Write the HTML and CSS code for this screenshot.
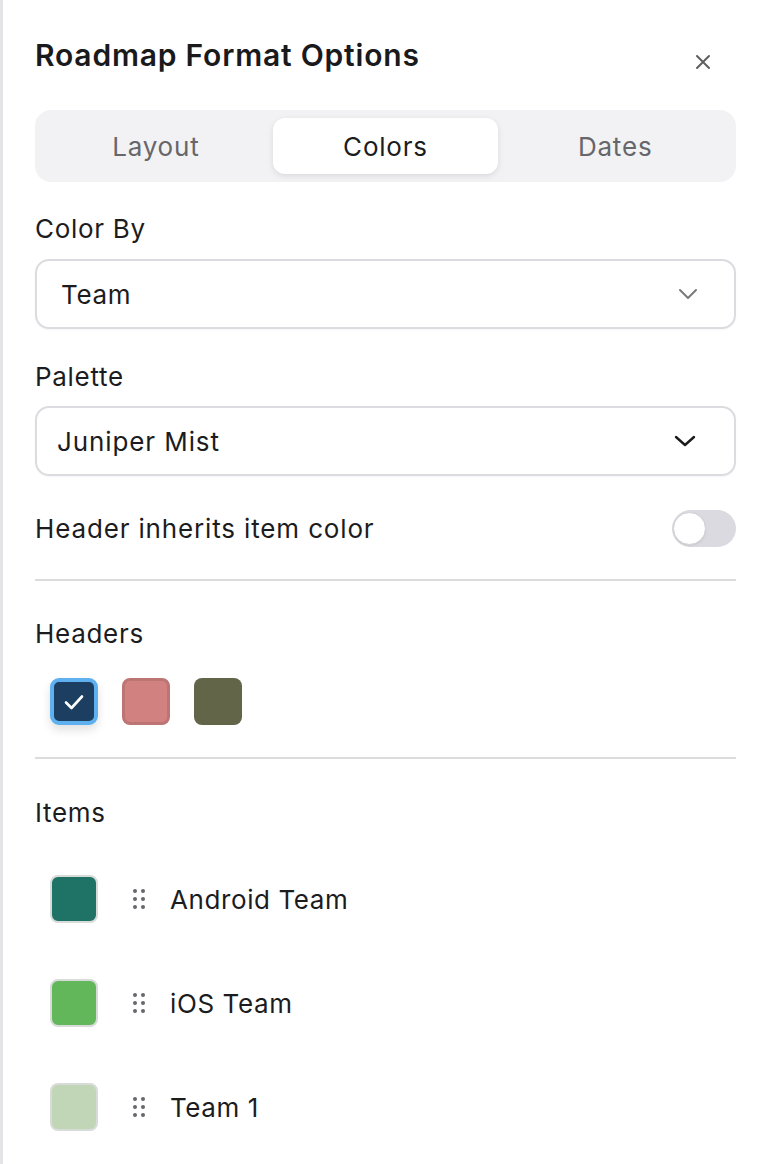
FILE: index.html
```html
<!DOCTYPE html>
<html lang="en">
<head>
<meta charset="utf-8">
<title>Roadmap Format Options</title>
<link rel="stylesheet" href="styles.css">
</head>
<body>
<div class="panel">
  <div class="header">
    <h1 class="title">Roadmap Format Options</h1>
    <button class="close" aria-label="Close">
      <svg width="16" height="16" viewBox="0 0 16 16"><path d="M2 2L14 14M14 2L2 14" stroke="#5f5f63" stroke-width="2" stroke-linecap="round"/></svg>
    </button>
  </div>

  <div class="tabs">
    <div class="tab">Layout</div>
    <div class="tab active">Colors</div>
    <div class="tab">Dates</div>
  </div>

  <div class="label lbl-colorby">Color By</div>
  <div class="select">
    <span class="select-text team">Team</span>
    <svg class="chev" width="20" height="12" viewBox="0 0 20 12"><path d="M2 2L10 10L18 2" fill="none" stroke="#7a7a7e" stroke-width="2" stroke-linecap="round" stroke-linejoin="round"/></svg>
  </div>

  <div class="label lbl-palette">Palette</div>
  <div class="select">
    <span class="select-text juniper">Juniper Mist</span>
    <svg class="chev dark" width="22" height="14" viewBox="0 0 22 14"><path d="M2 3L11 11L20 3" fill="none" stroke="#1c1c1e" stroke-width="2.4" stroke-linecap="round" stroke-linejoin="round"/></svg>
  </div>

  <div class="toggle-row">
    <span class="toggle-label">Header inherits item color</span>
    <span class="toggle"><span class="knob"></span></span>
  </div>

  <div class="divider div1"></div>

  <div class="label lbl-headers">Headers</div>
  <div class="swatches">
    <div class="swatch selected" style="background:#1c3f61">
      <svg width="22" height="18" viewBox="0 0 22 18"><path d="M3 9.5L8.5 15L19 3.5" fill="none" stroke="#ffffff" stroke-width="2.6" stroke-linecap="round" stroke-linejoin="round"/></svg>
    </div>
    <div class="swatch bordered" style="background:#d18180;border-color:#bd7574"></div>
    <div class="swatch" style="background:#626548"></div>
  </div>

  <div class="divider div2"></div>

  <div class="label lbl-items">Items</div>
  <div class="items">
    <div class="item">
      <div class="item-swatch" style="background:#1e7266"></div>
      <div class="grip"><i></i><i></i><i></i><i></i><i></i><i></i></div>
      <span class="item-name">Android Team</span>
    </div>
    <div class="item">
      <div class="item-swatch" style="background:#61b75a"></div>
      <div class="grip"><i></i><i></i><i></i><i></i><i></i><i></i></div>
      <span class="item-name">iOS Team</span>
    </div>
    <div class="item">
      <div class="item-swatch" style="background:#c1d6b7"></div>
      <div class="grip"><i></i><i></i><i></i><i></i><i></i><i></i></div>
      <span class="item-name">Team 1</span>
    </div>
  </div>
</div>
</body>
</html>
```

FILE: styles.css
```css
* { box-sizing: border-box; }
html, body {
  margin: 0;
  padding: 0;
  background: #ffffff;
}
body {
  font-family: Inter, "Noto Sans", "Liberation Sans", sans-serif;
  color: #1d1d1f;
}
.panel {
  min-height: 1164px;
  border-left: 3px solid #e4e4e6;
  padding: 37px 28px 0 32px;
  display: flex;
  flex-direction: column;
}
.header {
  display: flex;
  justify-content: space-between;
  align-items: flex-start;
  height: 36px;
}
.title {
  margin: 0;
  font-size: 30px;
  line-height: 36px;
  font-weight: 600;
  letter-spacing: 0.8px;
  color: #1a1a1c;
}
.close {
  border: 0;
  background: none;
  padding: 0;
  margin: 17px 25px 0 0;
  width: 16px;
  height: 16px;
  display: flex;
}
.tabs {
  margin-top: 37px;
  height: 72px;
  background: #f2f2f4;
  border-radius: 16px;
  padding: 8px;
  display: grid;
  grid-template-columns: 1fr 1fr 1fr;
  gap: 4px;
}
.tab {
  display: flex;
  align-items: center;
  justify-content: center;
  font-size: 26px;
  letter-spacing: 0.8px;
  color: #66666b;
  border-radius: 12px;
}
.tab.active {
  background: #ffffff;
  color: #1c1c1e;
  box-shadow: 0 2px 6px rgba(0,0,0,0.10);
}
.label {
  font-size: 26px;
  line-height: 32px;
  letter-spacing: 0.7px;
  color: #1c1c1e;
}
.lbl-colorby { margin-top: 31px; }
.lbl-palette { margin-top: 32px; }
.lbl-headers { margin-top: 37px; }
.lbl-items { margin-top: 38px; }
.select {
  margin-top: 14px;
  height: 70px;
  border: 2px solid #dcdce0;
  border-radius: 14px;
  display: flex;
  align-items: center;
  justify-content: space-between;
  box-shadow: 0 1px 2px rgba(0,0,0,0.04);
}
.lbl-palette + .select { margin-top: 13px; }
.select-text {
  font-size: 26px;
  letter-spacing: 0.7px;
  color: #1c1c1e;
}
.select-text.team { padding-left: 24px; }
.select-text.juniper { padding-left: 20px; letter-spacing: 0.9px; }
.chev { margin-right: 36px; }
.chev.dark { margin-right: 38px; }
.toggle-row {
  margin-top: 34px;
  display: flex;
  align-items: center;
  justify-content: space-between;
  height: 37px;
}
.toggle-label {
  font-size: 26px;
  letter-spacing: 0.85px;
  color: #1c1c1e;
}
.toggle {
  width: 64px;
  height: 37px;
  border-radius: 19px;
  background: #dadae0;
  position: relative;
  display: block;
}
.knob {
  position: absolute;
  left: 1px;
  top: 2px;
  width: 33px;
  height: 33px;
  border-radius: 50%;
  background: #ffffff;
  border: 1px solid #d0d0d6;
  box-shadow: 0 1px 2px rgba(0,0,0,0.08);
}
.divider {
  height: 2px;
  background: #dcdcdf;
}
.div1 { margin-top: 32px; }
.div2 { margin-top: 32px; }
.swatches {
  margin-top: 28px;
  padding-left: 15px;
  display: flex;
  gap: 24px;
}
.swatch {
  width: 48px;
  height: 47px;
  border-radius: 8px;
  border: 3px solid transparent;
  display: flex;
  align-items: center;
  justify-content: center;
}
.swatch.selected {
  border: 4px solid #5eb0ee;
  border-radius: 9px;
  box-shadow: 0 5px 10px rgba(0,0,0,0.12);
}
.items {
  margin-top: 46px;
  display: flex;
  flex-direction: column;
  gap: 56px;
}
.item {
  display: flex;
  align-items: center;
  height: 48px;
}
.item-swatch {
  margin-left: 15px;
  width: 48px;
  height: 48px;
  border-radius: 8px;
  border: 2px solid #d8dcd9;
}
.grip {
  margin-left: 35px;
  width: 12px;
  display: grid;
  grid-template-columns: 4px 4px;
  column-gap: 4px;
  row-gap: 4px;
}
.grip i {
  width: 4px;
  height: 4px;
  border-radius: 50%;
  background: #66666c;
  display: block;
}
.item-name {
  margin-left: 25px;
  font-size: 26px;
  letter-spacing: 0.6px;
  color: #1c1c1e;
}
```
